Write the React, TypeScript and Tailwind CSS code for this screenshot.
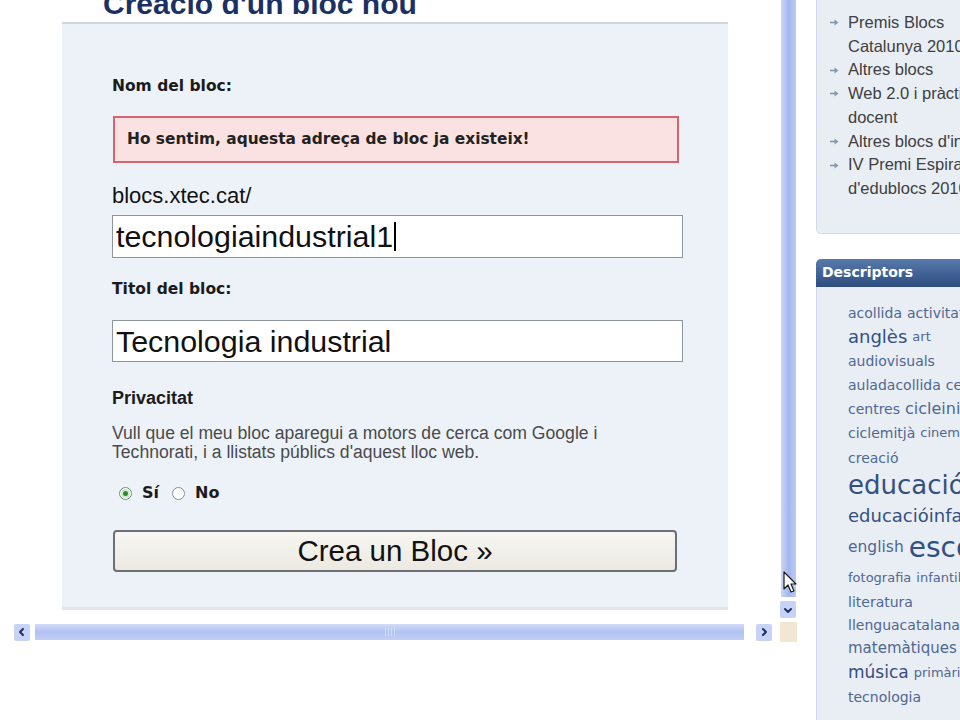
import { ReactNode } from "react";

const arial = "font-['Liberation_Sans',Arial,sans-serif]";
const verdana = "font-['DejaVu_Sans',Verdana,sans-serif]";

const sideLinks: string[][] = [
  ["Premis Blocs", "Catalunya 2010"],
  ["Altres blocs"],
  ["Web 2.0 i pràctica", "docent"],
  ["Altres blocs d'interès"],
  ["IV Premi Espiral", "d'edublocs 2010"],
];

type Tag = { word: string; size: string; dark?: boolean };

// each row of the tag cloud with its own height
const tagRows: { h: string; tags: Tag[] }[] = [
  { h: "h-[24px]", tags: [{ word: "acollida", size: "text-[14px]" }, { word: "activitats", size: "text-[14px]" }] },
  { h: "h-[24px]", tags: [{ word: "anglès", size: "text-[18px]", dark: true }, { word: "art", size: "text-[13px]" }] },
  { h: "h-[24px]", tags: [{ word: "audiovisuals", size: "text-[14px]" }] },
  { h: "h-[24px]", tags: [{ word: "auladacollida", size: "text-[14px]" }, { word: "cel", size: "text-[14px]" }] },
  { h: "h-[24px]", tags: [{ word: "centres", size: "text-[14px]" }, { word: "cicleinicial", size: "text-[16px]" }] },
  { h: "h-[24px]", tags: [{ word: "ciclemitjà", size: "text-[14px]" }, { word: "cinema", size: "text-[13px]" }] },
  { h: "h-[26px]", tags: [{ word: "creació", size: "text-[14px]" }] },
  { h: "h-[29px]", tags: [{ word: "educació", size: "text-[26px]", dark: true }] },
  { h: "h-[32px]", tags: [{ word: "educacióinfantil", size: "text-[18px]", dark: true }] },
  { h: "h-[32px]", tags: [{ word: "english", size: "text-[15.5px]" }, { word: "escola", size: "text-[28px]", dark: true }] },
  { h: "h-[27px]", tags: [{ word: "fotografia", size: "text-[13px]" }, { word: "infantil", size: "text-[13px]" }] },
  { h: "h-[23px]", tags: [{ word: "literatura", size: "text-[14px]" }] },
  { h: "h-[23px]", tags: [{ word: "llenguacatalana", size: "text-[14px]" }] },
  { h: "h-[24px]", tags: [{ word: "matemàtiques", size: "text-[15px]" }] },
  { h: "h-[24px]", tags: [{ word: "música", size: "text-[17px]", dark: true }, { word: "primària", size: "text-[13px]" }] },
  { h: "h-[24px]", tags: [{ word: "tecnologia", size: "text-[14px]" }] },
];

function Chevron({ dir }: { dir: "left" | "right" | "down" }) {
  const d = dir === "left" ? "M6 2 L3 5 L6 8" : dir === "right" ? "M4 2 L7 5 L4 8" : "M2 4 L5 7 L8 4";
  return (
    <svg width="10" height="10" viewBox="0 0 10 10">
      <path d={d} fill="none" stroke="#1d2f63" strokeWidth="2" strokeLinecap="round" strokeLinejoin="round" />
    </svg>
  );
}

function ScrollButton({ dir }: { dir: "left" | "right" | "down" }) {
  return (
    <div className="flex h-[17px] w-[16px] items-center justify-center rounded-[2px] bg-[#c6d3f6]">
      <Chevron dir={dir} />
    </div>
  );
}

function Radio({ checked }: { checked?: boolean }) {
  return (
    <div
      className={`flex h-[13px] w-[13px] items-center justify-center rounded-full border bg-white ${
        checked ? "border-[#6f8f74]" : "border-[#8a9198]"
      }`}
    >
      {checked && <div className="h-[5px] w-[5px] rounded-full bg-[#2f8a34] ring-2 ring-[#cfe8cf]" />}
    </div>
  );
}

function Label({ children }: { children: ReactNode }) {
  return <div className={`${verdana} text-[15.5px] leading-[18px] font-bold text-[#1b1b1b]`}>{children}</div>;
}

function FieldBox({ children, className = "" }: { children: ReactNode; className?: string }) {
  return (
    <div
      className={`flex w-[571px] items-center border border-[#8f959c] bg-white pl-[3px] ${arial} text-[30.4px] leading-none text-[#111] ${className}`}
    >
      {children}
    </div>
  );
}

function BlogForm() {
  return (
    <div className="h-full w-[780px] overflow-hidden bg-white">
      <h1 className={`${arial} -mt-[11px] ml-[103px] text-[30px] leading-[30px] font-bold text-[#1c3163]`}>
        Creació d'un bloc nou
      </h1>
      <div className="mt-[3px] ml-[62px] w-[666px] border-t-2 border-b-[3px] border-t-[#cfd5dd] border-b-[#e3e7ed] bg-[#edf2f9] pt-[53px] pb-[35px] pl-[50px]">
        <Label>Nom del bloc:</Label>
        <div
          className={`mt-[21px] ml-[1px] flex h-[47px] w-[566px] items-center border-2 border-[#d4646d] bg-[#fbe2e2] pl-[12px] ${verdana} text-[15.4px] font-bold text-[#222]`}
        >
          Ho sentim, aquesta adreça de bloc ja existeix!
        </div>
        <div className={`mt-[20px] ${arial} text-[22px] leading-[26px] text-[#111]`}>blocs.xtec.cat/</div>
        <FieldBox className="mt-[6px] h-[43px]">
          <span>tecnologiaindustrial1</span>
          <span className="ml-[1px] h-[29px] w-[2px] bg-black" />
        </FieldBox>
        <div className="mt-[22px]">
          <Label>Titol del bloc:</Label>
        </div>
        <FieldBox className="mt-[22px] h-[42px]">
          <span>Tecnologia industrial</span>
        </FieldBox>
        <div className={`mt-[25px] ${arial} text-[18px] leading-[22px] font-bold text-[#1b1b1b]`}>Privacitat</div>
        <p className={`mt-[15px] ${arial} text-[17.6px] leading-[19px] text-[#4a4a4a]`}>
          Vull que el meu bloc aparegui a motors de cerca com Google i
          <br />
          Technorati, i a llistats públics d'aquest lloc web.
        </p>
        <div className={`mt-[22px] ml-[7px] flex h-[18px] items-center ${verdana} text-[16px] font-bold text-[#1b1b1b]`}>
          <Radio checked />
          <span className="ml-[10px]">Sí</span>
          <div className="ml-[13px]">
            <Radio />
          </div>
          <span className="ml-[10px]">No</span>
        </div>
        <button
          className={`mt-[28px] ml-[1px] flex h-[42px] w-[564px] items-center justify-center rounded-[4px] border-2 border-[#6c6f74] bg-linear-to-b from-[#f7f6f2] to-[#ebe9e1] ${arial} text-[29.5px] text-[#111]`}
        >
          Crea un Bloc »
        </button>
      </div>
    </div>
  );
}

function VerticalScroll() {
  return (
    <div className="flex h-full w-[17px] flex-col bg-white">
      <div className="mx-[1px] flex-1 bg-linear-to-r from-[#cbd6f6] via-[#a4b6ee] to-[#bccaf4]" />
      <div className="mt-[4px] mb-[4px]">
        <ScrollButton dir="down" />
      </div>
    </div>
  );
}

function HorizontalScroll() {
  return (
    <div className="flex h-[20px]">
      <div className="flex w-[780px] items-center pl-[14px]">
        <ScrollButton dir="left" />
        <div className="ml-[5px] flex h-[16px] w-[709px] items-center justify-center bg-linear-to-b from-[#d3dcf7] via-[#b0c2f2] to-[#c2cff5]">
          <div className="flex gap-[2px] opacity-40">
            <div className="h-[8px] w-px bg-white" />
            <div className="h-[8px] w-px bg-white" />
            <div className="h-[8px] w-px bg-white" />
            <div className="h-[8px] w-px bg-white" />
          </div>
        </div>
        <div className="ml-[12px]">
          <ScrollButton dir="right" />
        </div>
      </div>
      <div className="w-[17px] bg-[#f1e7d3]" />
    </div>
  );
}

function Bullet() {
  return (
    <svg width="9" height="7" viewBox="0 0 9 7">
      <path d="M0 3.5 H5" stroke="#8596b3" strokeWidth="1.6" />
      <path d="M4.5 0.5 L8.5 3.5 L4.5 6.5 Z" fill="#8596b3" />
    </svg>
  );
}

function Sidebar() {
  return (
    <aside className="w-[163px] shrink-0 pl-[19px]">
      <div
        className={`w-[170px] rounded-bl-[5px] border border-t-0 border-[#d2d9e4] bg-[#e9eef5] pt-[11px] pb-[32px] pl-[13px] ${arial} text-[16.5px] leading-[23.7px] text-[#404040]`}
      >
        {sideLinks.map((lines) => (
          <div key={lines[0]} className="flex items-start">
            <div className="flex h-[23.7px] w-[18px] shrink-0 items-center">
              <Bullet />
            </div>
            <div className="whitespace-nowrap">
              {lines.map((l) => (
                <div key={l}>{l}</div>
              ))}
            </div>
          </div>
        ))}
      </div>

      <div className="mt-[25px] w-[170px]">
        <div
          className={`flex h-[28px] items-center rounded-tl-[5px] bg-linear-to-b from-[#5879ab] to-[#2e4e80] pl-[6px] ${verdana} text-[14px] font-bold text-white`}
        >
          Descriptors
        </div>
        <div className={`h-[460px] border-l border-[#d2d9e4] bg-[#e9eef5] pt-[14px] pl-[31px] ${verdana}`}>
          {tagRows.map((row, i) => (
            <div key={i} className={`flex items-center gap-[5px] whitespace-nowrap ${row.h}`}>
              {row.tags.map((t) => (
                <span key={t.word} className={`${t.size} leading-none ${t.dark ? "text-[#34507f]" : "text-[#4f6793]"}`}>
                  {t.word}
                </span>
              ))}
            </div>
          ))}
        </div>
      </div>
    </aside>
  );
}

function Pointer() {
  return (
    <svg className="absolute top-[571px] left-[783px]" width="15" height="24" viewBox="0 0 15 24">
      <path d="M1 1 L1 18 L5 14 L8 21 L11 20 L8 13 L13 13 Z" fill="white" stroke="#1a1a1a" strokeWidth="1.2" strokeLinejoin="round" />
    </svg>
  );
}

export default function App() {
  return (
    <div className="relative flex h-[720px] w-[960px] overflow-hidden bg-white">
      <div className="flex w-[797px] shrink-0 flex-col">
        <div className="flex h-[622px]">
          <BlogForm />
          <VerticalScroll />
        </div>
        <HorizontalScroll />
      </div>
      <Sidebar />
      <Pointer />
    </div>
  );
}
